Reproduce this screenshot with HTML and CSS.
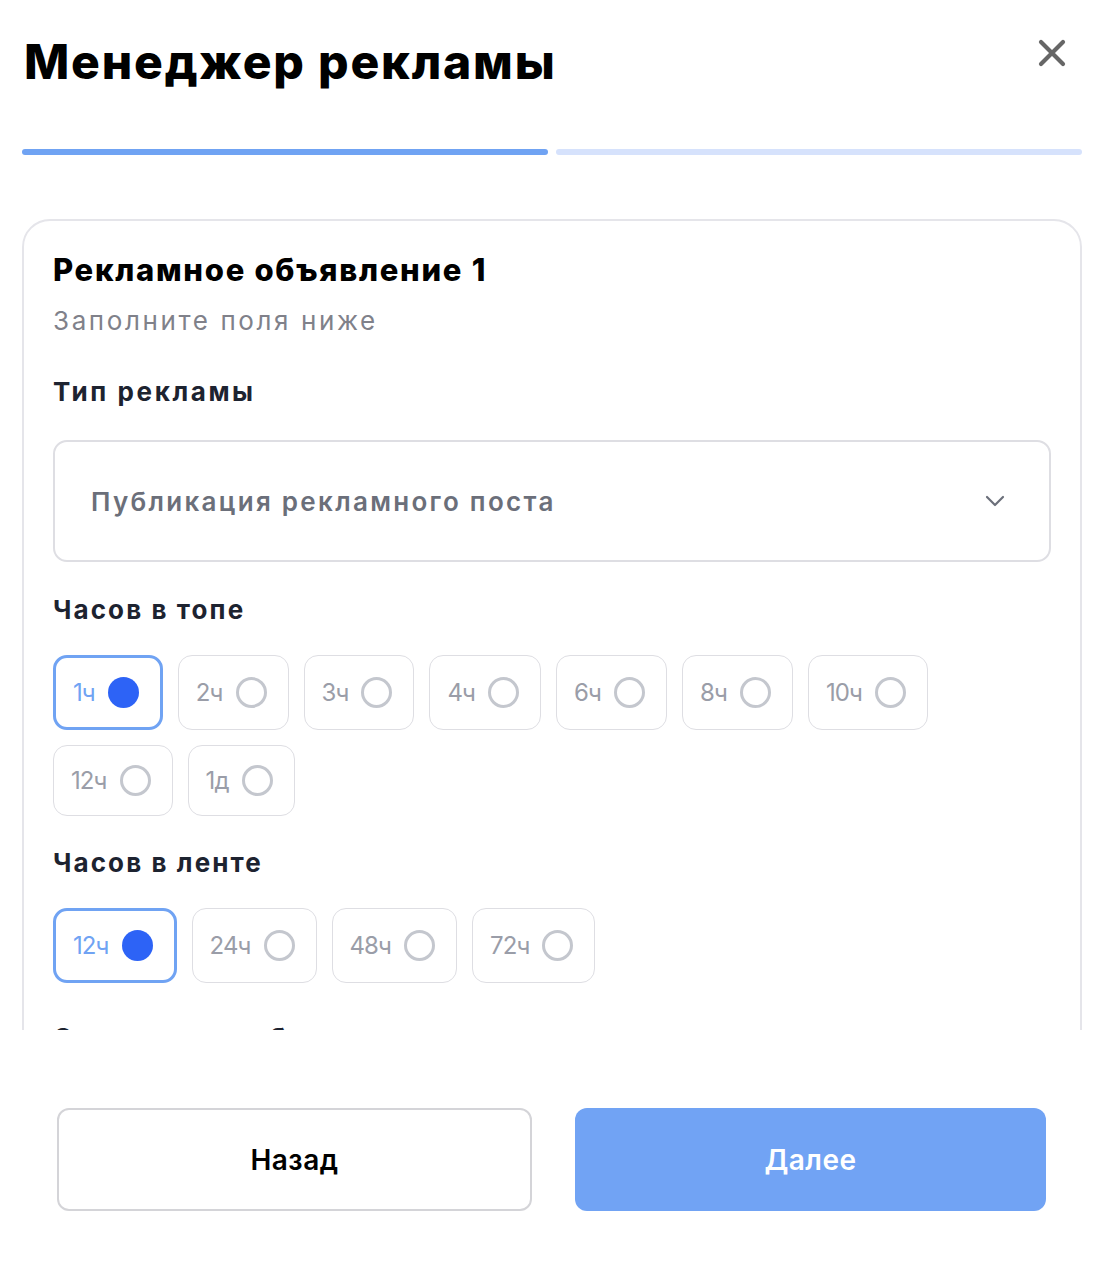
FILE: index.html
```html
<!DOCTYPE html>
<html lang="ru">
<head>
<meta charset="utf-8">
<title>Менеджер рекламы</title>
<link rel="stylesheet" href="styles.css">
</head>
<body>
<div class="page">
  <header class="header">
    <h1 class="title">Менеджер рекламы</h1>
    <button class="close" aria-label="Закрыть">
      <svg width="28" height="28" viewBox="0 0 28 28"><path d="M3 3L25 25M25 3L3 25" stroke="#666666" stroke-width="4.2" stroke-linecap="round" fill="none"/></svg>
    </button>
  </header>
  <div class="progress">
    <div class="step active"></div>
    <div class="step"></div>
  </div>
  <div class="scroll">
    <section class="card">
      <h2 class="card-title">Рекламное объявление 1</h2>
      <p class="card-sub">Заполните поля ниже</p>
      <h3 class="label label-type">Тип рекламы</h3>
      <div class="select">
        <span class="select-text">Публикация рекламного поста</span>
        <svg class="chev" width="20" height="12" viewBox="0 0 20 12"><path d="M2 2L10 10L18 2" stroke="#6b6f7a" stroke-width="2.2" stroke-linecap="round" stroke-linejoin="round" fill="none"/></svg>
      </div>
      <h3 class="label">Часов в топе</h3>
      <div class="chips">
        <div class="chip selected"><span>1ч</span><i class="radio"></i></div>
        <div class="chip"><span>2ч</span><i class="radio"></i></div>
        <div class="chip"><span>3ч</span><i class="radio"></i></div>
        <div class="chip"><span>4ч</span><i class="radio"></i></div>
        <div class="chip"><span>6ч</span><i class="radio"></i></div>
        <div class="chip"><span>8ч</span><i class="radio"></i></div>
        <div class="chip"><span>10ч</span><i class="radio"></i></div>
        <div class="chip"><span>12ч</span><i class="radio"></i></div>
        <div class="chip"><span>1д</span><i class="radio"></i></div>
      </div>
      <h3 class="label">Часов в ленте</h3>
      <div class="chips">
        <div class="chip selected"><span>12ч</span><i class="radio"></i></div>
        <div class="chip"><span>24ч</span><i class="radio"></i></div>
        <div class="chip"><span>48ч</span><i class="radio"></i></div>
        <div class="chip"><span>72ч</span><i class="radio"></i></div>
      </div>
      <h3 class="label label-next">Содержание объявления</h3>
      <div class="select">
        <span class="select-text">Текст объявления</span>
      </div>
    </section>
  </div>
  <footer class="footer">
    <button class="btn btn-back">Назад</button>
    <button class="btn btn-next">Далее</button>
  </footer>
</div>
</body>
</html>
```

FILE: styles.css
```css
* { box-sizing: border-box; }
html, body { margin: 0; padding: 0; background: #ffffff; }
body { font-family: Inter, "Noto Sans", "Liberation Sans", sans-serif; color: #000; }

.page { padding: 0 26px 0 22px; width: 1108px; }

.header { display: flex; justify-content: space-between; align-items: flex-start; padding-top: 33px; }
.title { margin: 0 0 0 2px; font-size: 48px; line-height: 58px; font-weight: 800; letter-spacing: 1.8px; color: #000; }
.close { border: 0; background: none; padding: 0; margin: 6px 16px 0 0; width: 28px; height: 28px; cursor: pointer; }
.close svg { display: block; }

.progress { display: flex; gap: 8px; margin-top: 58px; }
.step { flex: 1; height: 6px; border-radius: 3px; background: #d6e2fc; }
.step.active { background: #70a3f3; }

.scroll { margin-top: 64px; height: 811px; overflow: hidden; }
.card { border: 2px solid #e5e5ea; border-radius: 28px; padding: 31px 29px 40px; }

.card-title { margin: 0; font-size: 31px; line-height: 36px; font-weight: 800; letter-spacing: 1.7px; color: #000; }
.card-sub { margin: 17px 0 0; font-size: 26px; line-height: 32px; font-weight: 400; color: #80818a; letter-spacing: 2.6px; }
.label { margin: 32px 0 0; font-size: 26px; line-height: 32px; font-weight: 700; color: #1d2330; letter-spacing: 2.1px; }
.label-type { margin-top: 39px; letter-spacing: 2.6px; }

.select { margin-top: 32px; height: 122px; border: 2px solid #dedee3; border-radius: 14px; display: flex; align-items: center; justify-content: space-between; padding: 0 44px 0 36px; }
.select-text { font-size: 26px; font-weight: 600; color: #6b6f7a; letter-spacing: 2.3px; }
.chev { display: block; }

.chips { display: flex; flex-wrap: wrap; gap: 15px; margin-top: 29px; }
.chips + .label { margin-top: 31px; }
.chips + .label-next { margin-top: 39px; }
.chip { display: flex; align-items: center; gap: 13px; border: 1px solid #dedee3; border-radius: 14px; padding: 19px 21px 19px 17px; font-size: 24px; line-height: 30px; color: #9a9da8; }
.chip span { display: block; letter-spacing: -0.9px; }
.radio { display: block; width: 31px; height: 31px; border-radius: 50%; border: 3.5px solid #c4c7ce; }
.chip.selected { border: 3px solid #70a3f3; color: #70a3f3; }
.chip.selected .radio { border: 0; background: #2d63f6; }

.footer { display: flex; gap: 43px; margin: 78px 36px 0 35px; }
.btn { flex: 1; height: 103px; border-radius: 12px; font-family: Inter, "Noto Sans", sans-serif; font-size: 28px; line-height: 34px; font-weight: 600; letter-spacing: 0.5px; cursor: pointer; }
.btn-back { background: #fff; border: 2px solid #d4d4d8; color: #000; }
.btn-next { background: #71a3f4; border: 0; color: #fff; }
```
